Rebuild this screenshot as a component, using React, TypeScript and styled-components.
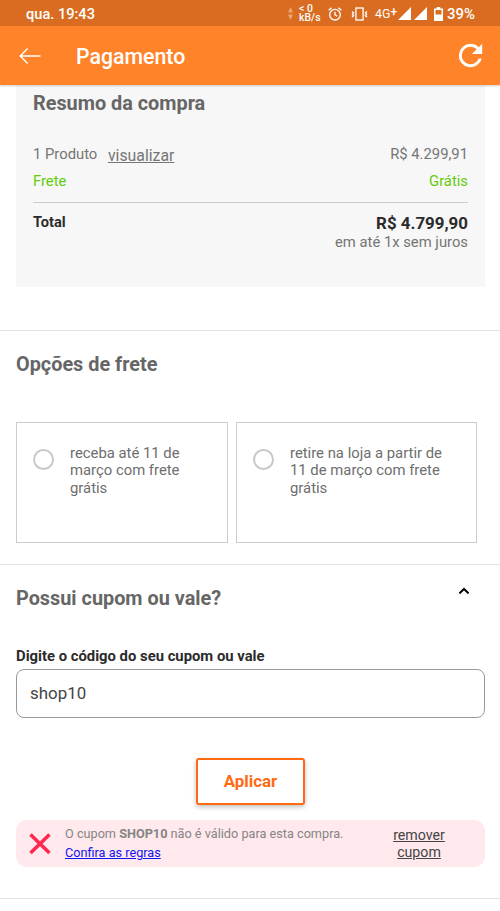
import React from "react";
import styled, { createGlobalStyle } from "styled-components";

const GlobalStyle = createGlobalStyle`
  *, *::before, *::after { box-sizing: border-box; }
  body {
    margin: 0;
    background: #fff;
    font-family: Roboto, "Liberation Sans", sans-serif;
    color: #666;
    overflow: hidden;
  }
  p, h1, h2 { margin: 0; }
`;

const Screen = styled.div`
  display: flex;
  flex-direction: column;
  width: 500px;
  height: 911px;
  overflow: hidden;
  background: #fff;
`;

const StatusBar = styled.div`
  display: flex;
  flex: none;
  align-items: center;
  justify-content: space-between;
  height: 26px;
  padding: 1px 25px 0 26px;
  background: #d96c20;
  color: #fff;
  font-weight: 500;
`;

const Clock = styled.span`
  font-size: 14.6px;
  line-height: 26px;
`;

const StatusIcons = styled.div`
  display: flex;
  align-items: center;
`;

const Glyph = styled.svg<{ $left?: number }>`
  display: block;
  flex: none;
  margin-left: ${(p) => p.$left ?? 0}px;
`;

const Speed = styled.span`
  width: 23px;
  margin-left: 6px;
  padding-bottom: 1px;
  font-size: 10.4px;
  line-height: 9px;
  text-align: left;
  white-space: nowrap;
`;

const Network = styled.span`
  display: flex;
  margin-left: 7px;
  width: 22px;
  font-size: 12.4px;
  font-weight: 400;
  line-height: 24px;
  white-space: nowrap;
`;

const Plus = styled.span`
  font-size: 12px;
  font-weight: 500;
  line-height: 20px;
`;

const Battery = styled.span`
  margin-left: 4px;
  font-size: 14.9px;
  line-height: 26px;
`;

const AppBar = styled.header`
  display: flex;
  flex: none;
  align-items: center;
  height: 59px;
  padding: 0 12px 0 19px;
  background: #ff8329;
  color: #fff;
  box-shadow: 0 1px 2px rgba(0, 0, 0, 0.2);
  z-index: 1;
`;

const Title = styled.h1`
  flex: 1;
  margin-left: 35px;
  padding-top: 2px;
  font-size: 21.3px;
  font-weight: 500;
  line-height: 26px;
`;

const IconButton = styled.button`
  display: flex;
  padding: 0;
  border: 0;
  background: none;
  color: inherit;
`;

const Heading = styled.h2`
  font-size: 19.85px;
  font-weight: 700;
  line-height: 24px;
  color: #666;
`;

const Summary = styled.section`
  flex: none;
  height: 202px;
  margin: 0 15px 0 16px;
  padding: 7px 17px 0;
  background: #f7f7f7;
  font-size: 14.8px;
`;

const Line = styled.div<{ $top?: number; $green?: boolean }>`
  display: flex;
  justify-content: space-between;
  margin-top: ${(p) => p.$top ?? 0}px;
  line-height: 20px;
  color: ${(p) => (p.$green ? "#62cc0c" : "#757575")};
`;

const ViewLink = styled.a`
  position: relative;
  top: 2px;
  margin-left: 7px;
  font-size: 15.8px;
  text-decoration: underline;
`;

const TotalBlock = styled.div`
  display: flex;
  justify-content: space-between;
  margin-top: 11px;
  padding-top: 9px;
  border-top: 1px solid #ccc;
`;

const TotalLabel = styled.strong`
  color: #2b2b2b;
  font-size: 14.6px;
  line-height: 20px;
`;

const TotalValue = styled.div`
  padding-top: 2px;
  text-align: right;
  font-size: 14.8px;
  line-height: 18px;
  color: #757575;

  strong {
    display: block;
    font-size: 16.9px;
    line-height: 19px;
    color: #2b2b2b;
  }
`;

const Section = styled.section<{ $height: number; $top: number }>`
  flex: none;
  height: ${(p) => p.$height}px;
  padding: ${(p) => p.$top}px 15px 0 16px;
  border-top: 1px solid #e3e3e3;
`;

const Spacer = styled.div`
  flex: none;
  height: 43px;
`;

const Options = styled.div`
  display: grid;
  grid-template-columns: 212px 241px;
  gap: 8px;
  margin-top: 45px;
`;

const Option = styled.label`
  display: flex;
  height: 121px;
  padding: 22px 16px 0;
  border: 1px solid #ccc;
  font-size: 14.85px;
  line-height: 17.4px;
  color: #6e6e6e;
`;

const Radio = styled.span`
  flex: none;
  width: 21px;
  height: 21px;
  margin: 4px 16px 0 0;
  border: 2px solid #c8c8c8;
  border-radius: 50%;
`;

const SectionHead = styled.div`
  display: flex;
  align-items: flex-start;
  justify-content: space-between;
  padding-right: 15px;
`;

const FieldLabel = styled.label`
  display: block;
  margin-top: 35px;
  font-size: 14.83px;
  font-weight: 700;
  line-height: 20px;
  color: #2b2b2b;
`;

const Field = styled.input`
  display: block;
  width: 469px;
  height: 49px;
  margin-top: 3px;
  padding: 0 13px 2px;
  border: 1px solid #999;
  border-radius: 8px;
  outline: 0;
  background: #fff;
  font: 400 16.9px Roboto, "Liberation Sans", sans-serif;
  color: #444;
`;

const Apply = styled.button`
  display: block;
  width: 109px;
  height: 47px;
  margin: 40px auto 0 180px;
  padding: 0 0 2px;
  border: 2px solid #ff6a13;
  border-radius: 3px;
  background: #fff;
  box-shadow: 0 2px 5px rgba(0, 0, 0, 0.25);
  font: 700 16.9px Roboto, "Liberation Sans", sans-serif;
  color: #ff6a13;
`;

const Alert = styled.div`
  display: flex;
  width: 469px;
  height: 47px;
  margin-top: 15px;
  padding-left: 13px;
  border-radius: 11px;
  background: #ffe9ec;
`;

const Message = styled.p`
  width: 300px;
  margin-left: 14px;
  padding-top: 4px;
  font-size: 12.7px;
  line-height: 19px;
  color: #858585;
  white-space: nowrap;

  a {
    color: #1414f0;
    text-decoration: underline;
  }
`;

const Remove = styled.a`
  width: 80px;
  margin-left: 14px;
  padding-top: 7px;
  font-size: 14.2px;
  line-height: 17px;
  text-align: center;
  text-decoration: underline;
  color: #444;
`;

export default function App() {
  return (
    <>
      <GlobalStyle />
      <Screen>
        <StatusBar>
          <Clock>qua. 19:43</Clock>
          <StatusIcons>
            <Glyph width="5" height="13" viewBox="0 0 5 13" fill="#eba672">
              <path d="M2.5 0 5 5.5H0zM2.5 13 0 7.5h5z" />
            </Glyph>
            <Speed>
              &lt; 0<br />
              kB/s
            </Speed>
            <Glyph $left={6} width="14" height="14" viewBox="0 0 14 14" fill="none" stroke="#fff" strokeWidth="1.3">
              <circle cx="7" cy="7.7" r="5.3" />
              <path d="M7 4.7v3.2l2.3 1.4M.6 3.2 3.6.8M13.4 3.2 10.4.8" />
            </Glyph>
            <Glyph $left={9} width="17" height="14" viewBox="0 0 17 14" fill="none" stroke="#fff" strokeWidth="1.3">
              <rect x="4.9" y="1" width="7.2" height="12" />
              <path d="M1 4.5 2.6 5.8 1.4 7.2 2.6 8.6 1 10M16 4.5 14.4 5.8 15.6 7.2 14.4 8.6 16 10" />
            </Glyph>
            <Network>
              4G<Plus>+</Plus>
            </Network>
            <Glyph $left={1} width="29" height="13" viewBox="0 0 29 13" fill="#fff">
              <path d="M0 13 13 0v13zM16 13 29 0v13z" />
            </Glyph>
            <Glyph $left={7} width="9" height="14" viewBox="0 0 9 14" fill="#fff">
              <path fillRule="evenodd" d="M2.7 0h3.6v1.5H9V14H0V1.5h2.7zM1.5 3v4.6h6V3z" />
            </Glyph>
            <Battery>39%</Battery>
          </StatusIcons>
        </StatusBar>

        <AppBar>
          <IconButton aria-label="Voltar">
            <Glyph width="22" height="16" viewBox="0 0 22 16" fill="none" stroke="#fff" strokeWidth="1.4">
              <path d="M21.5 8H1.2M8.6.6 1.2 8l7.4 7.4" />
            </Glyph>
          </IconButton>
          <Title>Pagamento</Title>
          <IconButton aria-label="Atualizar">
            <Glyph width="35" height="35" viewBox="0 0 24 24" fill="#fff">
              <path d="M17.65 6.35A7.96 7.96 0 0 0 12 4a8 8 0 1 0 7.73 10h-2.08A6 6 0 1 1 12 6c1.66 0 3.14.69 4.22 1.78L13 11h7V4z" />
            </Glyph>
          </IconButton>
        </AppBar>

        <Summary>
          <Heading>Resumo da compra</Heading>
          <Line $top={28}>
            <span>
              1 Produto <ViewLink>visualizar</ViewLink>
            </span>
            <span>R$ 4.299,91</span>
          </Line>
          <Line $top={7} $green>
            <span>Frete</span>
            <span>Grátis</span>
          </Line>
          <TotalBlock>
            <TotalLabel>Total</TotalLabel>
            <TotalValue>
              <strong>R$ 4.799,90</strong>
              em até 1x sem juros
            </TotalValue>
          </TotalBlock>
        </Summary>
        <Spacer />

        <Section $height={234} $top={22}>
          <Heading>Opções de frete</Heading>
          <Options>
            <Option>
              <Radio />
              <span>
                receba até 11 de
                <br />
                março com frete
                <br />
                grátis
              </span>
            </Option>
            <Option>
              <Radio />
              <span>
                retire na loja a partir de
                <br />
                11 de março com frete
                <br />
                grátis
              </span>
            </Option>
          </Options>
        </Section>

        <Section $height={334} $top={22}>
          <SectionHead>
            <Heading>Possui cupom ou vale?</Heading>
            <Glyph width="12" height="7" viewBox="0 1 12 7" fill="none" stroke="#000" strokeWidth="2">
              <path d="M1.4 7.4 6 3l4.6 4.4" />
            </Glyph>
          </SectionHead>
          <FieldLabel htmlFor="coupon">Digite o código do seu cupom ou vale</FieldLabel>
          <Field id="coupon" defaultValue="shop10" />
          <Apply>Aplicar</Apply>
          <Alert>
            <Glyph width="22" height="47" viewBox="0 0 22 47" fill="none" stroke="#ff2850" strokeWidth="3.6" strokeLinecap="butt">
              <path d="m1.5 14.5 19 18.5M20.5 14.5 1.5 33" />
            </Glyph>
            <Message>
              O cupom <strong>SHOP10</strong> não é válido para esta compra.
              <br />
              <a>Confira as regras</a>
            </Message>
            <Remove>
              remover
              <br />
              cupom
            </Remove>
          </Alert>
        </Section>
        <Section $height={13} $top={0} />
      </Screen>
    </>
  );
}
